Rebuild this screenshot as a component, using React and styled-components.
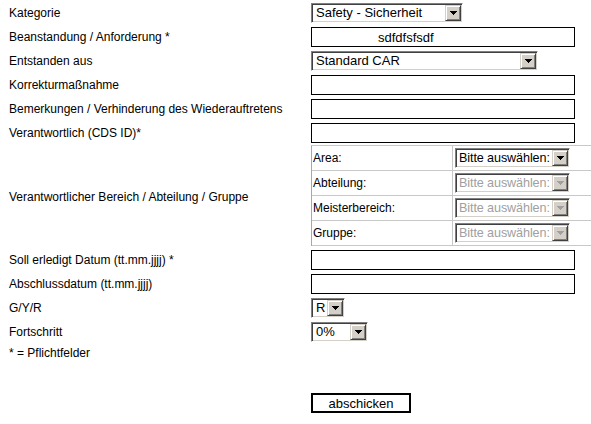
import styled, { createGlobalStyle } from 'styled-components';

const GlobalStyle = createGlobalStyle`
  html, body {
    margin: 0;
    padding: 0;
    background: #fff;
    overflow: hidden;
  }
  body {
    font-family: "Liberation Sans", Arial, sans-serif;
    font-size: 12px;
    color: #000;
  }
`;

const areaRows = [
  { label: 'Area:', disabled: false },
  { label: 'Abteilung:', disabled: true },
  { label: 'Meisterbereich:', disabled: true },
  { label: 'Gruppe:', disabled: true },
];

function Select({ width, value, options, disabled, tight }) {
  const color = disabled ? '#a0a0a0' : '#000';
  return (
    <SelectBox $w={width}>
      <NativeSelect defaultValue={value} disabled={disabled} $disabled={disabled} $tight={tight}>
        {options.map((o) => (
          <option key={o}>{o}</option>
        ))}
      </NativeSelect>
      <ArrowButton>
        <svg width="7" height="4" viewBox="0 0 7 4" shapeRendering="crispEdges">
          <rect x="0" y="0" width="7" height="1" fill={color} />
          <rect x="1" y="1" width="5" height="1" fill={color} />
          <rect x="2" y="2" width="3" height="1" fill={color} />
          <rect x="3" y="3" width="1" height="1" fill={color} />
        </svg>
      </ArrowButton>
    </SelectBox>
  );
}

export default function App() {
  return (
    <Page>
      <GlobalStyle />
      <FormGrid>
        <Label>Kategorie</Label>
        <Field>
          <Select width={152} value="Safety - Sicherheit" options={['Safety - Sicherheit', 'Qualität', 'Kosten']} />
        </Field>

        <Label>Beanstandung / Anforderung *</Label>
        <Field>
          <TextInput $indent={66} defaultValue="sdfdfsfsdf" />
        </Field>

        <Label>Entstanden aus</Label>
        <Field>
          <Select width={227} value="Standard CAR" options={['Standard CAR', 'Audit', 'Sonstiges']} />
        </Field>

        <Label>Korrekturmaßnahme</Label>
        <Field>
          <TextInput />
        </Field>

        <Label>Bemerkungen / Verhinderung des Wiederauftretens</Label>
        <Field>
          <TextInput />
        </Field>

        <Label>Verantwortlich (CDS ID)*</Label>
        <Field>
          <TextInput />
        </Field>

        <Label>Verantwortlicher Bereich / Abteilung / Gruppe</Label>
        <Field>
          <SubTable>
            {areaRows.map((r) => (
              <SubRow key={r.label}>
                <SubLabel>{r.label}</SubLabel>
                <SubField>
                  <Select
                    width={115}
                    value="Bitte auswählen:"
                    options={['Bitte auswählen:']}
                    disabled={r.disabled}
                    tight
                  />
                </SubField>
              </SubRow>
            ))}
          </SubTable>
        </Field>

        <Label>Soll erledigt Datum (tt.mm.jjjj) *</Label>
        <Field>
          <TextInput />
        </Field>

        <Label>Abschlussdatum (tt.mm.jjjj)</Label>
        <Field>
          <TextInput />
        </Field>

        <Label>G/Y/R</Label>
        <Field>
          <Select width={34} value="R" options={['G', 'Y', 'R']} />
        </Field>

        <Label>Fortschritt</Label>
        <Field>
          <Select width={57} value="0%" options={['0%', '25%', '50%', '75%', '100%']} />
        </Field>
      </FormGrid>

      <Note>* = Pflichtfelder</Note>

      <ButtonRow>
        <SubmitButton type="button">abschicken</SubmitButton>
      </ButtonRow>
    </Page>
  );
}

const Page = styled.div`
  padding: 1px 0 0 9px;
`;

const FormGrid = styled.div`
  display: grid;
  grid-template-columns: 302px 1fr;
  grid-auto-rows: minmax(24px, auto);
`;

const Label = styled.div`
  display: flex;
  align-items: center;
  white-space: nowrap;
`;

const Field = styled.div`
  display: flex;
  align-items: center;
  min-width: 0;
`;

const TextInput = styled.input.attrs({ type: 'text' })`
  box-sizing: border-box;
  width: 264px;
  height: 20px;
  margin: 0;
  border: 1px solid #000;
  padding: 0 2px 0 ${(p) => p.$indent || 2}px;
  font-family: "Liberation Sans", Arial, sans-serif;
  font-size: 13px;
  color: #000;
  background: #fff;
  outline: none;
`;

const SelectBox = styled.span`
  box-sizing: border-box;
  display: inline-flex;
  align-items: stretch;
  width: ${(p) => p.$w}px;
  height: 20px;
  border-style: solid;
  border-width: 1px;
  border-color: #808080 #fff #fff #808080;
  box-shadow: inset 1px 1px #404040, inset -1px -1px #d4d0c8;
  padding: 1px;
  background: #fff;
`;

const NativeSelect = styled.select`
  appearance: none;
  flex: 1;
  min-width: 0;
  margin: 0;
  border: none;
  padding: 0 0 0 ${(p) => (p.$tight ? 2 : 3)}px;
  background: transparent;
  font-family: "Liberation Sans", Arial, sans-serif;
  font-size: ${(p) => (p.$tight ? 12.6 : 13)}px;
  letter-spacing: ${(p) => (p.$tight ? -0.1 : 0)}px;
  line-height: 16px;
  color: ${(p) => (p.$disabled ? '#a0a0a0' : '#000')};
  outline: none;
  opacity: 1;
`;

const ArrowButton = styled.span`
  box-sizing: border-box;
  flex: 0 0 16px;
  display: flex;
  align-items: center;
  justify-content: center;
  background: #d4d0c8;
  border-style: solid;
  border-width: 1px;
  border-color: #d4d0c8 #404040 #404040 #d4d0c8;
  box-shadow: inset 1px 1px #fff, inset -1px -1px #808080;
`;

const SubTable = styled.div`
  width: 100%;
  border-top: 1px solid #c8c8c8;
  border-left: 1px solid #a8a8a8;
  margin-bottom: 2px;
`;

const SubRow = styled.div`
  display: grid;
  grid-template-columns: 141px 1fr;
  height: 25px;
  box-sizing: border-box;
  border-bottom: 1px solid #c8c8c8;
`;

const SubLabel = styled.div`
  display: flex;
  align-items: center;
  padding-left: 1px;
  border-right: 1px solid #c8c8c8;
`;

const SubField = styled.div`
  display: flex;
  align-items: center;
  padding-left: 2px;
`;

const Note = styled.div`
  line-height: 16px;
  margin-top: 1px;
`;

const ButtonRow = styled.div`
  margin: 32px 0 0 302px;
`;

const SubmitButton = styled.button`
  box-sizing: border-box;
  width: 100px;
  height: 20px;
  margin: 0;
  padding: 0;
  border: 2px solid #000;
  background: #fff;
  font-family: "Liberation Sans", Arial, sans-serif;
  font-size: 13px;
  color: #000;
`;
